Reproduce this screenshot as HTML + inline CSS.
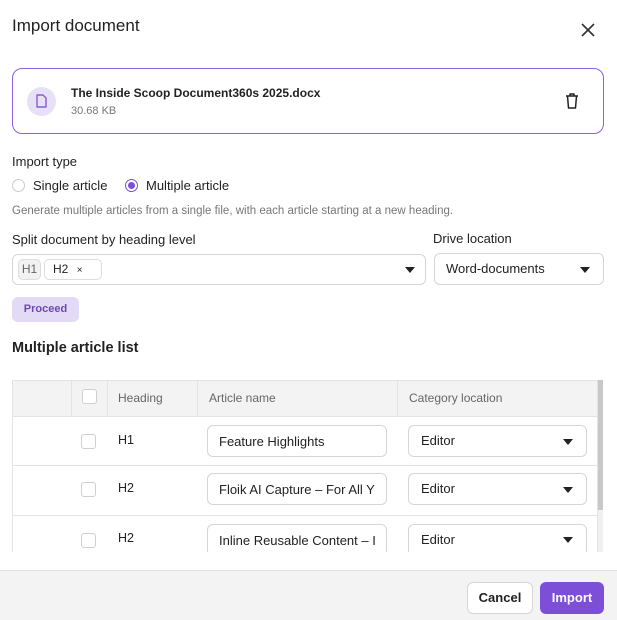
<!DOCTYPE html>
<html><head><meta charset="utf-8"><style>
*{box-sizing:border-box;margin:0;padding:0}
body{width:617px;height:620px;background:#fff;font-family:"Liberation Sans",sans-serif;color:#222;position:relative;overflow:hidden}
.a{position:absolute;white-space:nowrap}
.sel{position:absolute;border:1px solid #d6d6d6;border-radius:6px;background:#fff}
.tri{position:absolute;width:0;height:0;border-left:5px solid transparent;border-right:5px solid transparent;border-top:6px solid #222}
.cb{position:absolute;width:15px;height:15px;border:1px solid #cfcfcf;border-radius:3px;background:#fff}
.hl{position:absolute;left:12px;width:586px;height:1px;background:#e3e3e3}
</style></head><body>
<div class="a" style="left:12px;top:16px;font-size:17px;">Import document</div>
<svg class="a" style="left:581px;top:23px" width="14" height="14" viewBox="0 0 14 14"><path d="M1 1L13 13M13 1L1 13" stroke="#333" stroke-width="1.6"/></svg>

<div class="a" style="left:12px;top:68px;width:592px;height:66px;border:1px solid #8f62e0;border-radius:10px"></div>
<div class="a" style="left:27px;top:87px;width:29px;height:29px;border-radius:50%;background:#e7e0f6"></div>
<svg class="a" style="left:36px;top:94px" width="11" height="14" viewBox="0 0 11 14"><path d="M1 1H7L10 4V13H1Z" fill="none" stroke="#8a5ad8" stroke-width="1.4" stroke-linejoin="round"/></svg>
<div class="a" style="left:71px;top:86px;font-size:12px;font-weight:bold;color:#222">The Inside Scoop Document360s 2025.docx</div>
<div class="a" style="left:71px;top:105px;font-size:11px;color:#777">30.68 KB</div>
<svg class="a" style="left:565px;top:93px" width="14" height="16" viewBox="0 0 14 16"><path d="M1 3H13M5 3V1H9V3M2.5 3L3.5 15H10.5L11.5 3" fill="none" stroke="#222" stroke-width="1.5" stroke-linejoin="round"/></svg>

<div class="a" style="left:12px;top:154px;font-size:13px">Import type</div>
<div class="a" style="left:12px;top:179px;width:13px;height:13px;border:1px solid #ccc;border-radius:50%"></div>
<div class="a" style="left:33px;top:178px;font-size:13px">Single article</div>
<div class="a" style="left:125px;top:179px;width:13px;height:13px;border:1px solid #7b4fd6;border-radius:50%"><div style="margin:2px;width:7px;height:7px;border-radius:50%;background:#7b4fd6"></div></div>
<div class="a" style="left:146px;top:178px;font-size:13px">Multiple article</div>
<div class="a" style="left:12px;top:205px;font-size:11.5px;color:#777">Generate multiple articles from a single file, with each article starting at a new heading.</div>

<div class="a" style="left:12px;top:232px;font-size:13px">Split document by heading level</div>
<div class="a" style="left:433px;top:231px;font-size:13px">Drive location</div>
<div class="sel" style="left:12px;top:254px;width:414px;height:31px"></div>
<div class="a" style="left:18px;top:259px;width:23px;height:21px;border:1px solid #ddd;border-radius:5px;background:#f2f2f2;font-size:12px;color:#666;text-align:center;line-height:19px">H1</div>
<div class="a" style="left:44px;top:259px;width:58px;height:21px;border:1px solid #ddd;border-radius:5px;background:#fff;font-size:12px;line-height:19px;padding-left:8px">H2 <span style="font-size:10px;margin-left:5px">×</span></div>
<div class="tri" style="left:405px;top:267px"></div>
<div class="sel" style="left:434px;top:253px;width:170px;height:32px"></div>
<div class="a" style="left:446px;top:261px;font-size:13px">Word-documents</div>
<div class="tri" style="left:580px;top:267px"></div>

<div class="a" style="left:12px;top:297px;width:67px;height:25px;border-radius:6px;background:#e3daf5;color:#6a48b8;font-size:11px;font-weight:bold;text-align:center;line-height:25px">Proceed</div>

<div class="a" style="left:12px;top:340px;font-size:14.5px;font-weight:bold">Multiple article list</div>

<div class="a" style="left:12px;top:380px;width:586px;height:172px;border:1px solid #e3e3e3;border-bottom:none;overflow:hidden"></div>
<div class="a" style="left:13px;top:381px;width:584px;height:36px;background:#f3f3f3;border-bottom:1px solid #e3e3e3"></div>
<div class="a" style="left:71px;top:381px;width:1px;height:36px;background:#e3e3e3"></div>
<div class="a" style="left:107px;top:381px;width:1px;height:36px;background:#e3e3e3"></div>
<div class="a" style="left:197px;top:381px;width:1px;height:36px;background:#e3e3e3"></div>
<div class="a" style="left:397px;top:381px;width:1px;height:36px;background:#e3e3e3"></div>
<div class="cb" style="left:82px;top:389px"></div>
<div class="a" style="left:118px;top:391px;font-size:12px;color:#666">Heading</div>
<div class="a" style="left:209px;top:391px;font-size:12px;color:#666">Article name</div>
<div class="a" style="left:409px;top:391px;font-size:12px;color:#666">Category location</div>
<div class="a" style="left:598px;top:380px;width:5px;height:172px;background:#f0f0f0"></div>
<div class="a" style="left:598px;top:380px;width:5px;height:130px;background:#c8c8c8"></div>

<div class="hl" style="top:465px"></div>
<div class="hl" style="top:515px"></div>

<div class="cb" style="left:81px;top:434px"></div>
<div class="a" style="left:118px;top:433px;font-size:12.5px">H1</div>
<div class="sel" style="left:207px;top:425px;width:180px;height:32px;font-size:13px;padding:8px 11px">Feature Highlights</div>
<div class="sel" style="left:408px;top:425px;width:179px;height:32px;font-size:13px;padding:7px 12px">Editor</div>
<div class="tri" style="left:563px;top:439px"></div>

<div class="cb" style="left:81px;top:482px"></div>
<div class="a" style="left:118px;top:481px;font-size:12.5px">H2</div>
<div class="sel" style="left:207px;top:473px;width:180px;height:32px;font-size:13px;padding:8px 11px;overflow:hidden">Floik AI Capture – For All Y</div>
<div class="sel" style="left:408px;top:473px;width:179px;height:32px;font-size:13px;padding:7px 12px">Editor</div>
<div class="tri" style="left:563px;top:487px"></div>

<div class="cb" style="left:81px;top:533px"></div>
<div class="a" style="left:118px;top:531px;font-size:12.5px">H2</div>
<div class="a" style="left:0;top:522px;width:617px;height:30px;overflow:hidden">
<div class="sel" style="left:207px;top:2px;width:180px;height:32px;font-size:13px;padding:8px 11px;overflow:hidden">Inline Reusable Content – I</div>
<div class="sel" style="left:408px;top:2px;width:179px;height:32px;font-size:13px;padding:7px 12px">Editor</div>
<div class="tri" style="left:563px;top:15px"></div>
</div>

<div class="a" style="left:0;top:570px;width:617px;height:50px;background:#f3f3f3;border-top:1px solid #e0e0e0"></div>
<div class="a" style="left:467px;top:582px;width:66px;height:32px;border:1px solid #d6d6d6;border-radius:6px;background:#fff;font-size:13px;font-weight:bold;text-align:center;line-height:30px">Cancel</div>
<div class="a" style="left:540px;top:582px;width:64px;height:32px;border-radius:6px;background:#7d4fd8;color:#fff;font-size:13px;font-weight:bold;text-align:center;line-height:32px">Import</div>
</body></html>
